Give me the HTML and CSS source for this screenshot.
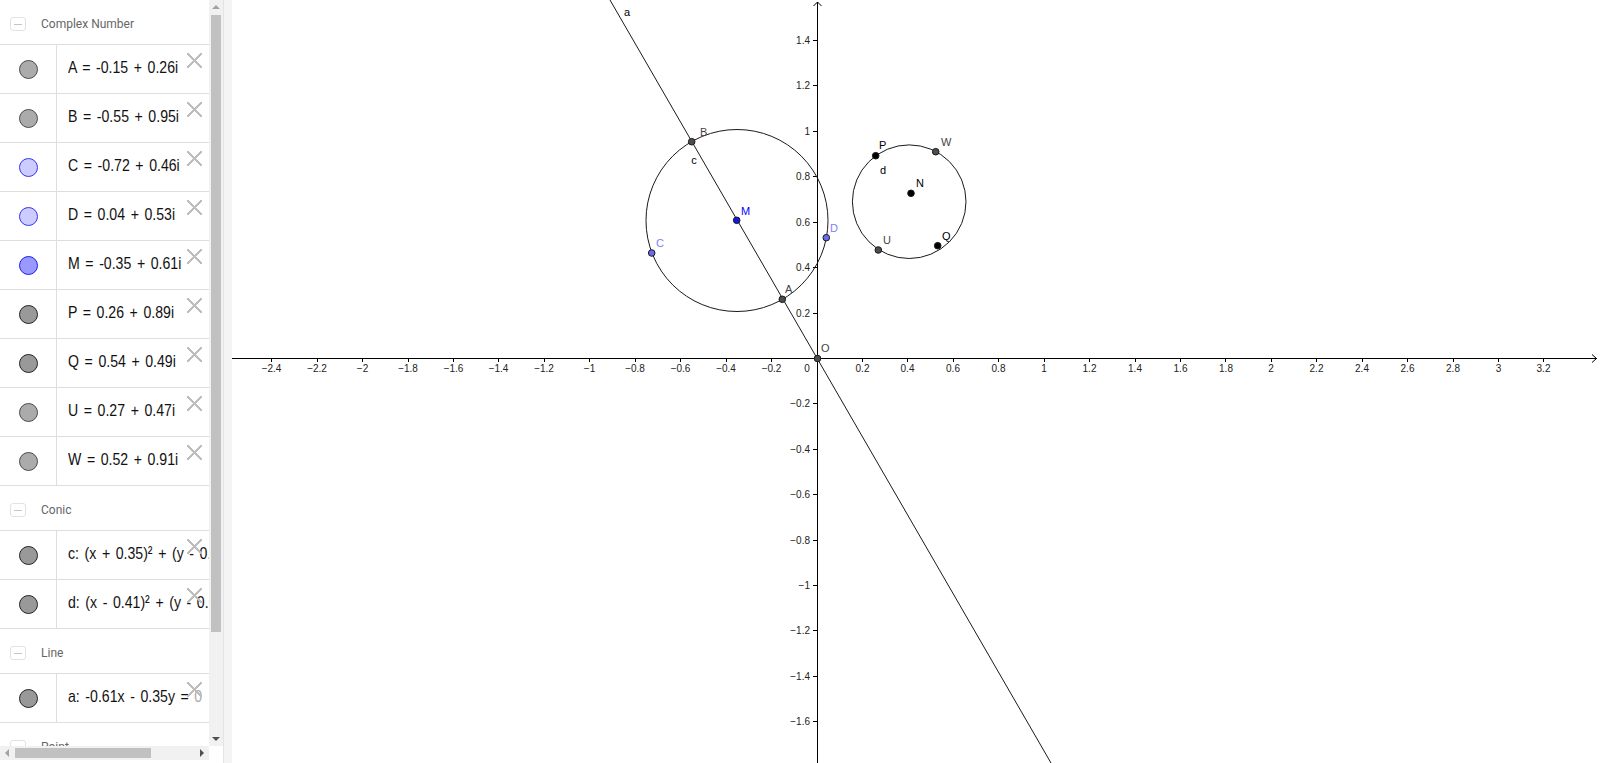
FILE: index.html
```html
<!DOCTYPE html>
<html>
<head>
<meta charset="utf-8">
<title>Complex Numbers</title>
<link rel="stylesheet" href="styles.css">
</head>
<body>
<div class="app">
  <div class="sidebar">
    <div class="list">
      <div class="group-head"><span class="toggle"></span><span class="group-title">Complex Number</span></div>
      <div class="row"><div class="marker"><span class="dot dot-lgray"></span></div><div class="expr"><span class="tx">A = -0.15 + 0.26i</span></div><span class="del"></span></div>
      <div class="row"><div class="marker"><span class="dot dot-lgray"></span></div><div class="expr"><span class="tx">B = -0.55 + 0.95i</span></div><span class="del"></span></div>
      <div class="row"><div class="marker"><span class="dot dot-lblue"></span></div><div class="expr"><span class="tx">C = -0.72 + 0.46i</span></div><span class="del"></span></div>
      <div class="row"><div class="marker"><span class="dot dot-lblue"></span></div><div class="expr"><span class="tx">D = 0.04 + 0.53i</span></div><span class="del"></span></div>
      <div class="row"><div class="marker"><span class="dot dot-blue"></span></div><div class="expr"><span class="tx">M = -0.35 + 0.61i</span></div><span class="del"></span></div>
      <div class="row"><div class="marker"><span class="dot dot-dgray"></span></div><div class="expr"><span class="tx">P = 0.26 + 0.89i</span></div><span class="del"></span></div>
      <div class="row"><div class="marker"><span class="dot dot-dgray"></span></div><div class="expr"><span class="tx">Q = 0.54 + 0.49i</span></div><span class="del"></span></div>
      <div class="row"><div class="marker"><span class="dot dot-lgray"></span></div><div class="expr"><span class="tx">U = 0.27 + 0.47i</span></div><span class="del"></span></div>
      <div class="row"><div class="marker"><span class="dot dot-lgray"></span></div><div class="expr"><span class="tx">W = 0.52 + 0.91i</span></div><span class="del"></span></div>
      <div class="group-head"><span class="toggle"></span><span class="group-title">Conic</span></div>
      <div class="row"><div class="marker"><span class="dot dot-dgray"></span></div><div class="expr"><span class="tx">c: (x + 0.35)² + (y - 0.61)² = 0.16</span></div><span class="del"></span></div>
      <div class="row"><div class="marker"><span class="dot dot-dgray"></span></div><div class="expr"><span class="tx">d: (x - 0.41)² + (y - 0.69)² = 0.06</span></div><span class="del"></span></div>
      <div class="group-head"><span class="toggle"></span><span class="group-title">Line</span></div>
      <div class="row"><div class="marker"><span class="dot dot-dgray"></span></div><div class="expr"><span class="tx">a: -0.61x - 0.35y = <span class="faded">0</span></span></div><span class="del"></span></div>
      <div class="group-head"><span class="toggle"></span><span class="group-title">Point</span></div>
      <div class="row"><div class="marker"><span class="dot dot-dgray"></span></div><div class="expr"><span class="tx">N = (0.42, 0.73)</span></div><span class="del"></span></div>
    </div>
    <div class="vscroll">
      <span class="arrow arrow-up"></span>
      <div class="vtrack"><span class="vthumb"></span></div>
      <span class="arrow arrow-down"></span>
    </div>
    <div class="hscroll">
      <span class="arrow arrow-left"></span>
      <div class="htrack"><span class="hthumb"></span></div>
      <span class="arrow arrow-right"></span>
    </div>
    <div class="corner"></div>
  </div>
  <div class="splitter"></div>
  <svg class="canvas" viewBox="232 0 1368 763" width="1368" height="763" xmlns="http://www.w3.org/2000/svg">
    <g class="axes" stroke="#000" stroke-width="1" fill="none">
      <line x1="232" y1="358.5" x2="1597" y2="358.5"/>
      <polyline points="1592,354.5 1596.5,358.5 1592,362.5"/>
      <line x1="817.5" y1="2" x2="817.5" y2="763"/>
      <polyline points="813.5,6 817.5,2 821.5,6"/>
    </g>
    <g class="ticks" stroke="#000" stroke-width="1">
      <line x1="271.5" y1="358" x2="271.5" y2="362"/>
      <line x1="317.5" y1="358" x2="317.5" y2="362"/>
      <line x1="362.5" y1="358" x2="362.5" y2="362"/>
      <line x1="408.5" y1="358" x2="408.5" y2="362"/>
      <line x1="453.5" y1="358" x2="453.5" y2="362"/>
      <line x1="498.5" y1="358" x2="498.5" y2="362"/>
      <line x1="544.5" y1="358" x2="544.5" y2="362"/>
      <line x1="589.5" y1="358" x2="589.5" y2="362"/>
      <line x1="635.5" y1="358" x2="635.5" y2="362"/>
      <line x1="680.5" y1="358" x2="680.5" y2="362"/>
      <line x1="726.5" y1="358" x2="726.5" y2="362"/>
      <line x1="771.5" y1="358" x2="771.5" y2="362"/>
      <line x1="862.5" y1="358" x2="862.5" y2="362"/>
      <line x1="907.5" y1="358" x2="907.5" y2="362"/>
      <line x1="953.5" y1="358" x2="953.5" y2="362"/>
      <line x1="998.5" y1="358" x2="998.5" y2="362"/>
      <line x1="1044.5" y1="358" x2="1044.5" y2="362"/>
      <line x1="1089.5" y1="358" x2="1089.5" y2="362"/>
      <line x1="1135.5" y1="358" x2="1135.5" y2="362"/>
      <line x1="1180.5" y1="358" x2="1180.5" y2="362"/>
      <line x1="1225.5" y1="358" x2="1225.5" y2="362"/>
      <line x1="1271.5" y1="358" x2="1271.5" y2="362"/>
      <line x1="1316.5" y1="358" x2="1316.5" y2="362"/>
      <line x1="1362.5" y1="358" x2="1362.5" y2="362"/>
      <line x1="1407.5" y1="358" x2="1407.5" y2="362"/>
      <line x1="1453.5" y1="358" x2="1453.5" y2="362"/>
      <line x1="1498.5" y1="358" x2="1498.5" y2="362"/>
      <line x1="1543.5" y1="358" x2="1543.5" y2="362"/>
      <line x1="813" y1="40.5" x2="817" y2="40.5"/>
      <line x1="813" y1="85.5" x2="817" y2="85.5"/>
      <line x1="813" y1="131.5" x2="817" y2="131.5"/>
      <line x1="813" y1="176.5" x2="817" y2="176.5"/>
      <line x1="813" y1="222.5" x2="817" y2="222.5"/>
      <line x1="813" y1="267.5" x2="817" y2="267.5"/>
      <line x1="813" y1="313.5" x2="817" y2="313.5"/>
      <line x1="813" y1="403.5" x2="817" y2="403.5"/>
      <line x1="813" y1="449.5" x2="817" y2="449.5"/>
      <line x1="813" y1="494.5" x2="817" y2="494.5"/>
      <line x1="813" y1="540.5" x2="817" y2="540.5"/>
      <line x1="813" y1="585.5" x2="817" y2="585.5"/>
      <line x1="813" y1="630.5" x2="817" y2="630.5"/>
      <line x1="813" y1="676.5" x2="817" y2="676.5"/>
      <line x1="813" y1="721.5" x2="817" y2="721.5"/>
    </g>
    <g class="xlabels" text-anchor="middle">
      <text x="271.5" y="372">−2.4</text>
      <text x="317" y="372">−2.2</text>
      <text x="362.5" y="372">−2</text>
      <text x="408" y="372">−1.8</text>
      <text x="453.5" y="372">−1.6</text>
      <text x="498.5" y="372">−1.4</text>
      <text x="544" y="372">−1.2</text>
      <text x="589.5" y="372">−1</text>
      <text x="635" y="372">−0.8</text>
      <text x="680.5" y="372">−0.6</text>
      <text x="726" y="372">−0.4</text>
      <text x="771.5" y="372">−0.2</text>
      <text x="807" y="372">0</text>
      <text x="862.5" y="372">0.2</text>
      <text x="907.5" y="372">0.4</text>
      <text x="953" y="372">0.6</text>
      <text x="998.5" y="372">0.8</text>
      <text x="1044" y="372">1</text>
      <text x="1089.5" y="372">1.2</text>
      <text x="1135" y="372">1.4</text>
      <text x="1180.5" y="372">1.6</text>
      <text x="1226" y="372">1.8</text>
      <text x="1271" y="372">2</text>
      <text x="1316.5" y="372">2.2</text>
      <text x="1362" y="372">2.4</text>
      <text x="1407.5" y="372">2.6</text>
      <text x="1453" y="372">2.8</text>
      <text x="1498.5" y="372">3</text>
      <text x="1543.5" y="372">3.2</text>
    </g>
    <g class="ylabels" text-anchor="end">
      <text x="810" y="44">1.4</text>
      <text x="810" y="89">1.2</text>
      <text x="810" y="135">1</text>
      <text x="810" y="180">0.8</text>
      <text x="810" y="226">0.6</text>
      <text x="810" y="271">0.4</text>
      <text x="810" y="317">0.2</text>
      <text x="810" y="407">−0.2</text>
      <text x="810" y="453">−0.4</text>
      <text x="810" y="498">−0.6</text>
      <text x="810" y="544">−0.8</text>
      <text x="810" y="589">−1</text>
      <text x="810" y="634">−1.2</text>
      <text x="810" y="680">−1.4</text>
      <text x="810" y="725">−1.6</text>
    </g>
    <g class="objects" fill="none" stroke="#1a1a1a" stroke-width="1">
      <line x1="610" y1="0" x2="1051" y2="763"/>
      <circle cx="737" cy="220.5" r="91"/>
      <circle cx="909.2" cy="201.7" r="56.8"/>
    </g>
    <g class="points" stroke="#1a1a1a" stroke-width="1">
      <circle cx="782.3" cy="299.3" r="3.3" fill="#4d4d4d"/>
      <circle cx="691.7" cy="141.7" r="3.3" fill="#4d4d4d"/>
      <circle cx="651.7" cy="253" r="3.3" fill="#6a6aef"/>
      <circle cx="826.3" cy="237.7" r="3.3" fill="#6a6aef"/>
      <circle cx="736.7" cy="220.3" r="3.3" fill="#1414e6"/>
      <circle cx="875.7" cy="155.7" r="3.3" fill="#000"/>
      <circle cx="937.7" cy="245.7" r="3.3" fill="#000"/>
      <circle cx="878.3" cy="250" r="3.3" fill="#4d4d4d"/>
      <circle cx="935.7" cy="151.7" r="3.3" fill="#4d4d4d"/>
      <circle cx="911" cy="193.3" r="3.3" fill="#000"/>
      <circle cx="817.5" cy="358.5" r="3.3" fill="#4d4d4d"/>
    </g>
    <g class="plabels">
      <text class="lab-gray" x="700" y="136">B</text>
      <text class="lab-black" x="694" y="164" text-anchor="middle">c</text>
      <text class="lab-blue" x="741" y="215">M</text>
      <text class="lab-lblue" x="656" y="247">C</text>
      <text class="lab-lblue" x="830" y="232">D</text>
      <text class="lab-gray" x="785" y="293">A</text>
      <text class="lab-black" x="879" y="149">P</text>
      <text class="lab-gray" x="941" y="146">W</text>
      <text class="lab-black" x="883" y="174" text-anchor="middle">d</text>
      <text class="lab-black" x="916" y="187">N</text>
      <text class="lab-gray" x="883" y="244">U</text>
      <text class="lab-black" x="942" y="240">Q</text>
      <text class="lab-gray" x="821" y="352">O</text>
      <text class="lab-black" x="627" y="15.5" text-anchor="middle">a</text>
    </g>
  </svg>
</div>
</body>
</html>
```

FILE: styles.css
```css
html, body {
  margin: 0;
  padding: 0;
  background: #fff;
  overflow: hidden;
}

.app {
  display: flex;
  width: 1600px;
  height: 763px;
}

/* ---------- algebra sidebar ---------- */
.sidebar {
  flex: none;
  display: grid;
  grid-template-columns: 209px 14px;
  grid-template-rows: 746px 14px;
  align-content: start;
}

.list {
  overflow: hidden;
  min-width: 0;
}

.group-head {
  height: 40px;
  padding-top: 4px;
  border-bottom: 1px solid #dedede;
  display: flex;
  align-items: center;
  padding-left: 10px;
}

.toggle {
  width: 16px;
  height: 14px;
  box-sizing: border-box;
  border: 1px solid #e2e2e2;
  border-radius: 3px;
  display: flex;
  align-items: center;
  justify-content: center;
}

.toggle::after {
  content: "";
  width: 8px;
  height: 1px;
  background: #c4c4c4;
}

.group-title {
  margin-left: 15px;
  font-family: Roboto, "Liberation Sans", sans-serif;
  font-size: 12px;
  color: #666;
}

.row {
  height: 48px;
  border-bottom: 1px solid #dedede;
  display: flex;
  position: relative;
}

.marker {
  width: 56px;
  flex: none;
  border-right: 1px solid #dedede;
  display: flex;
  align-items: center;
  justify-content: center;
}

.dot {
  width: 19px;
  height: 19px;
  box-sizing: border-box;
  border-radius: 50%;
  border: 1px solid #444;
}

.dot-lgray { background: #ababab; border-color: #4a4a4a; }
.dot-dgray { background: #999; border-color: #222; }
.dot-lblue { background: #ccf; border-color: #3535f0; }
.dot-blue  { background: #99f; border-color: #1c1cf0; }

.expr {
  flex: 1;
  min-width: 0;
  padding-left: 11px;
  padding-bottom: 2px;
  display: flex;
  align-items: center;
  white-space: nowrap;
  overflow: hidden;
  font-family: "Liberation Sans", Arial, sans-serif;
  font-size: 17px;
  color: #111;
}

.tx {
  display: inline-block;
  transform: scaleX(0.83);
  transform-origin: left center;
  word-spacing: 2px;
}

.faded { color: #aaa; }

.del {
  position: absolute;
  left: 187px;
  top: 8px;
  width: 15px;
  height: 15px;
  background:
    linear-gradient(45deg, transparent 46%, #bdbdbd 46%, #bdbdbd 54%, transparent 54%),
    linear-gradient(-45deg, transparent 46%, #bdbdbd 46%, #bdbdbd 54%, transparent 54%);
}

/* scrollbars */
.vscroll {
  background: #f1f1f1;
  display: flex;
  flex-direction: column;
}

.vtrack {
  flex: 1;
  padding: 1px 2px 0 2px;
}

.vthumb {
  display: block;
  height: 617px;
  background: #c1c1c1;
}

.hscroll {
  background: #f1f1f1;
  display: flex;
}

.htrack {
  flex: 1;
  padding: 2px 0 2px 1px;
}

.hthumb {
  display: block;
  width: 136px;
  height: 100%;
  background: #c1c1c1;
}

.arrow {
  flex: none;
  width: 14px;
  height: 14px;
  display: flex;
  align-items: center;
  justify-content: center;
}

.arrow::after {
  content: "";
  width: 0;
  height: 0;
  border: 4px solid transparent;
}

.arrow-up::after { border-bottom-color: #a3a3a3; border-top-width: 0; }
.arrow-down::after { border-top-color: #505050; border-bottom-width: 0; }
.arrow-left::after { border-right-color: #a3a3a3; border-left-width: 0; }
.arrow-right::after { border-left-color: #505050; border-right-width: 0; }

.corner { background: #fff; }

.splitter {
  flex: none;
  width: 9px;
  background: #f4f4f4;
  border-left: 1px solid #e4e4e4;
  box-sizing: border-box;
}

/* ---------- graphics view ---------- */
.canvas {
  flex: none;
  display: block;
}

.canvas text {
  font-family: "Liberation Sans", Arial, sans-serif;
}

.xlabels text, .ylabels text {
  font-size: 10px;
  fill: #222;
}

.plabels text {
  font-size: 11px;
}

.lab-gray { fill: #444; }
.lab-black { fill: #000; }
.lab-blue { fill: #0000ff; }
.lab-lblue { fill: #7d7dff; }
```
